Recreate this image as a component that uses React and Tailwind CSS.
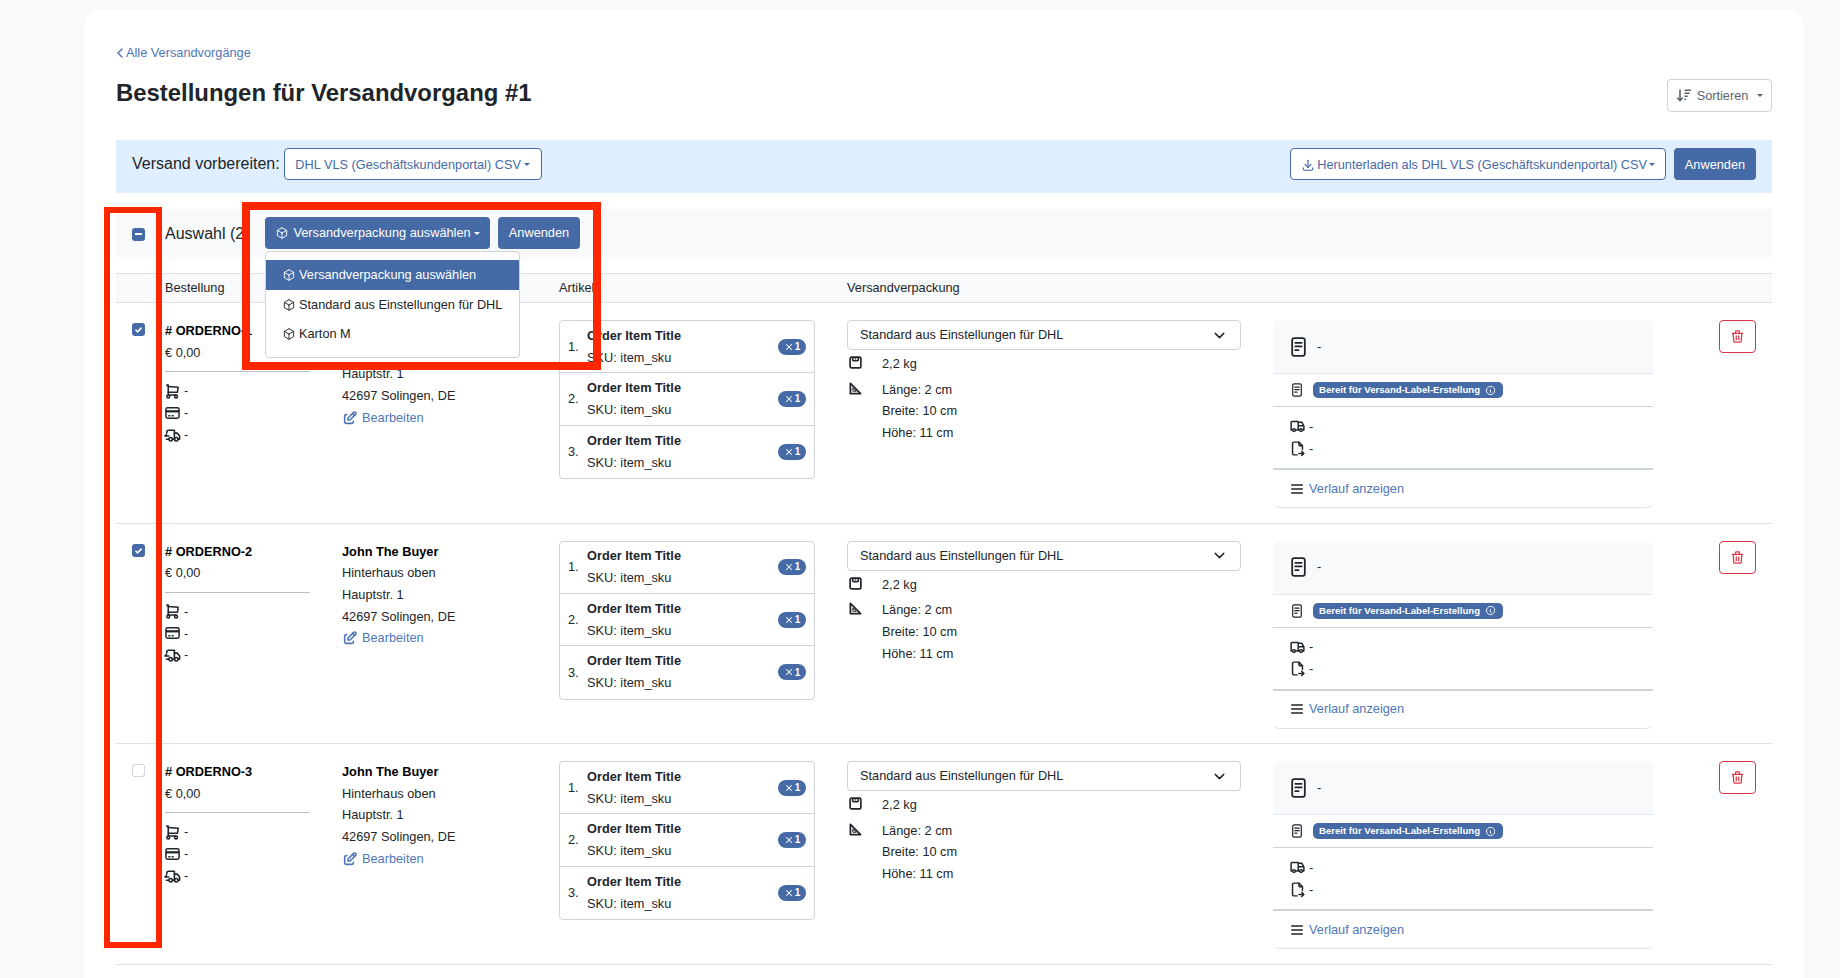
import React from "react";
import {
  TbBox, TbShoppingCart, TbTruck, TbFileExport,
  TbTrash, TbInfoCircle, TbEdit, TbChevronLeft, TbDownload, TbMenu2, TbChevronDown, TbX,
} from "react-icons/tb";

const Caret = ({ className = "" }) => (
  <span className={`inline-block w-0 h-0 border-x-[3.5px] border-t-[3.5px] border-x-transparent border-t-current ${className}`} />
);

const Weight = () => (
  <svg viewBox="0 0 14 14" className="w-[13px] h-[13px]" fill="none" stroke="currentColor" strokeWidth="1.8">
    <rect x="1.2" y="1.2" width="11.6" height="11.6" rx="1.5" />
    <path d="M4 1.5v2.6c0 .6.4 1 1 1h4c.6 0 1-.4 1-1V1.5M7 2.5v1.4" />
  </svg>
);

const SetSquare = () => (
  <svg viewBox="0 0 14 14" className="w-[13px] h-[13px]" fill="none" stroke="currentColor" strokeWidth="1.9" strokeLinejoin="round">
    <path d="M1.5 1.5v11h11z" />
    <path d="M4.2 10h3.6L4.2 6.4zM3 8.5h1" strokeWidth="1" />
  </svg>
);

const SortIcon = () => (
  <svg viewBox="0 0 16 14" className="w-[16px] h-[15px]" fill="none" stroke="currentColor" strokeWidth="1.6">
    <path d="M4 1v11M1.3 9.3 4 12l2.7-2.7" />
    <path d="M8.5 1.8h6.5M8.5 4.8h5M8.5 7.8h3.2M8.5 10.8h1.5" />
  </svg>
);

const DocIcon = ({ className }) => (
  <svg viewBox="0 0 14 19" className={className} fill="none" stroke="currentColor" strokeWidth="1.7" strokeLinecap="round">
    <rect x="1" y="1" width="12" height="17" rx="2" />
    <path d="M4 5.5h6M4 9h6M4 12.5h3" />
  </svg>
);

const CardIcon = ({ className }) => (
  <svg viewBox="0 0 16 14" className={className} fill="none" stroke="currentColor" strokeWidth="1.6">
    <rect x="1" y="1.5" width="14" height="11" rx="1.8" />
    <path d="M1 5.2h14" strokeWidth="2.4" />
    <path d="M3.5 9.8h2.2M7 9.8h2.2" />
  </svg>
);

const TruckMove = ({ className }) => (
  <svg viewBox="0 0 18 16" className={className} fill="none" stroke="currentColor" strokeWidth="1.7" strokeLinecap="round" strokeLinejoin="round">
    <path d="M3 6V4.5A1.5 1.5 0 0 1 4.5 3H11v9.5H9" />
    <path d="M11 6h3l2.5 3v3.5H15" />
    <circle cx="7" cy="12.5" r="1.8" />
    <circle cx="13" cy="12.5" r="1.8" />
    <path d="M1 9h4M1 9l1.5-1.5M5 12.5H2.5" />
  </svg>
);

function Items() {
  return (
    <div className="w-[256px] border border-[#ced4da] rounded-[4px] flex flex-col">
      {[1, 2, 3].map((n) => (
        <div key={n} className={`h-[52.4px] flex items-center pl-[8px] pr-[8px] ${n < 3 ? "border-b border-[#ced4da]" : ""}`}>
          <span className="w-[19px] shrink-0">{n}.</span>
          <div className="flex-1 min-w-0">
            <div className="font-bold leading-[22px] text-[#212529]">Order Item Title</div>
            <div className="leading-[22px]">SKU: item_sku</div>
          </div>
          <span className="w-[28px] h-[16px] rounded-full bg-[#456aa6] text-white text-[10px] font-bold flex items-center justify-center gap-[1px]">
            <TbX className="w-[10px] h-[10px]" strokeWidth={2.5} />1
          </span>
        </div>
      ))}
    </div>
  );
}

function Row({ state, no }) {
  return (
    <div className="h-[220.5px] flex border-b border-[#dee2e6] pt-[17px]">
      <div className="w-[49px] pl-[16px] pt-[3px] shrink-0">
        {state === "checked" ? (
          <span className="block w-[13px] h-[13px] rounded-[3px] bg-[#456aa6] text-white">
            <svg viewBox="0 0 13 13" className="w-[13px] h-[13px]" fill="none" stroke="currentColor" strokeWidth="1.6"><path d="M3.5 6.7 5.6 8.8 9.6 4.6" /></svg>
          </span>
        ) : (
          <span className="block w-[13px] h-[13px] rounded-[3px] border border-[#ced4da] bg-white" />
        )}
      </div>
      <div className="w-[177px] shrink-0">
        <div className="font-bold text-black">{`# ORDERNO-${no}`}</div>
        <div>€ 0,00</div>
        <div className="w-[145px] border-t border-[#bcc1c7] mt-[8px] mb-[8px]" />
        <div className="flex items-center gap-[3px] -ml-[1px]">
          <TbShoppingCart className="w-[17px] h-[17px]" strokeWidth={2.2} />
          <span>-</span>
        </div>
        <div className="flex items-center gap-[4px]">
          <CardIcon className="w-[15px] h-[14px]" />
          <span>-</span>
        </div>
        <div className="flex items-center gap-[3px] -ml-[1px]">
          <TruckMove className="w-[17px] h-[16px]" />
          <span>-</span>
        </div>
      </div>
      <div className="w-[217px] shrink-0">
        <div className="font-bold text-black">John The Buyer</div>
        <div>Hinterhaus oben</div>
        <div>Hauptstr. 1</div>
        <div>42697 Solingen, DE</div>
        <div className="flex items-center gap-[4px] text-[#4f76b8]">
          <TbEdit className="w-[16px] h-[16px]" strokeWidth={2.4} />
          Bearbeiten
        </div>
      </div>
      <div className="w-[288px] shrink-0">
        <Items />
      </div>
      <div className="w-[426px] shrink-0">
        <div className="w-[394px] h-[30px] border border-[#ced4da] rounded-[4px] flex items-center justify-between pl-[12px] pr-[12px]">
          <span>Standard aus Einstellungen für DHL</span>
          <TbChevronDown className="w-[17px] h-[17px]" />
        </div>
        <div className="flex mt-[3px]">
          <span className="w-[35px] pl-[2px] pt-[3px]"><Weight /></span>
          <span>2,2 kg</span>
        </div>
        <div className="flex mt-[4px]">
          <span className="w-[35px] pl-[2px] pt-[3px]"><SetSquare /></span>
          <div>
            <div>Länge: 2 cm</div>
            <div>Breite: 10 cm</div>
            <div>Höhe: 11 cm</div>
          </div>
        </div>
      </div>
      <div className="w-[446px] shrink-0">
        <div className="w-[380px] h-[188px] rounded-[6px] border-b border-[#dee2e6] overflow-hidden flex flex-col">
          <div className="h-[54px] bg-[#f8f9fa] border-b border-[#e2e8f0] flex items-center pl-[18px] gap-[11px]">
            <DocIcon className="w-[15px] h-[20px]" />
            <span>-</span>
          </div>
          <div className="h-[33px] border-b border-[#ced4da] flex items-center pl-[19px] gap-[11px]">
            <DocIcon className="w-[10px] h-[14px]" />
            <span className="h-[16px] rounded-[5px] bg-[#456aa6] text-white text-[9.6px] font-bold flex items-center gap-[5px] pl-[6px] pr-[7px]">
              Bereit für Versand-Label-Erstellung
              <TbInfoCircle className="w-[11px] h-[11px]" />
            </span>
          </div>
          <div className="h-[63px] border-b-2 border-[#ced4da] flex flex-col justify-center pl-[16px]">
            <div className="flex items-center gap-[3px]">
              <TbTruck className="w-[17px] h-[17px]" strokeWidth={2.1} />
              <span>-</span>
            </div>
            <div className="flex items-center gap-[3px]">
              <TbFileExport className="w-[17px] h-[17px]" strokeWidth={2.1} />
              <span>-</span>
            </div>
          </div>
          <div className="flex-1 flex items-center pl-[16px] gap-[4px] text-[#4f76b8]">
            <TbMenu2 className="w-[16px] h-[16px] text-[#212529]" strokeWidth={2.2} />
            Verlauf anzeigen
          </div>
        </div>
      </div>
      <div className="w-[37px] h-[33px] border border-[#dc3545] rounded-[4px] flex items-center justify-center text-[#dc3545] shrink-0">
        <TbTrash className="w-[15px] h-[15px]" />
      </div>
    </div>
  );
}

export default function App() {
  return (
    <div className="relative h-screen overflow-hidden bg-[#f8f9fb] text-[12.75px] leading-[21.67px] text-[#212529] font-['Liberation_Sans',Arial,sans-serif]">
      <div className="ml-[84px] mt-[10px] w-[1720px] h-[1100px] bg-white rounded-[16px] pt-[33px] pl-[32px] pr-[32px]">
        <div className="flex justify-between items-start h-[97px]">
          <div>
            <a className="flex items-center h-[20px] text-[#4f76b8]">
              <TbChevronLeft className="w-[16px] h-[16px] -ml-[4px] -mr-[2px]" strokeWidth={2.2} />
              Alle Versandvorgänge
            </a>
            <h1 className="mt-[14px] text-[23.9px] leading-[32px] font-bold text-[#212529]">Bestellungen für Versandvorgang #1</h1>
          </div>
          <button className="mt-[36px] w-[105px] h-[33px] border border-[#ced4da] rounded-[4px] flex items-center justify-center gap-[5px] text-[#5c636a]">
            <SortIcon />
            <span>Sortieren</span>
            <Caret className="ml-[4px]" />
          </button>
        </div>

        <div className="h-[53px] bg-[#e0efff] flex justify-between pt-[8px] pl-[16px] pr-[16px]">
          <div className="flex items-start gap-[4px]">
            <span className="text-[16px] leading-[32px]">Versand vorbereiten:</span>
            <button className="h-[32px] w-[258px] pt-[1px] bg-white border border-[#456aa6] rounded-[4px] text-[#456aa6] flex items-center justify-center gap-[3px]">
              DHL VLS (Geschäftskundenportal) CSV
              <Caret />
            </button>
          </div>
          <div className="flex items-start gap-[8px]">
            <button className="h-[32px] pt-[1px] px-[10px] bg-white border border-[#456aa6] rounded-[4px] text-[#456aa6] flex items-center gap-[2px]">
              <TbDownload className="w-[14px] h-[14px]" />
              Herunterladen als DHL VLS (Geschäftskundenportal) CSV
              <Caret />
            </button>
            <button className="h-[32px] pt-[1px] w-[82px] bg-[#456aa6] rounded-[4px] text-white">Anwenden</button>
          </div>
        </div>

        <div className="relative mt-[16px] h-[48px] bg-[#f8f9fa] flex items-center pl-[16px]">
          <span className="mt-[2px] w-[13px] h-[13px] rounded-[3px] bg-[#456aa6] flex items-center justify-center shrink-0">
            <span className="w-[7px] h-[2px] bg-white" />
          </span>
          <span className="mt-[2px] ml-[20px] w-[100px] text-[16px] shrink-0">Auswahl (2)</span>
          <button className="h-[32px] w-[225px] bg-[#456aa6] rounded-[4px] text-white flex items-center justify-center gap-[3px]">
            <TbBox className="w-[14px] h-[14px] mr-[1px]" strokeWidth={1.6} />
            Versandverpackung auswählen
            <Caret />
          </button>
          <button className="ml-[8px] h-[32px] w-[82px] bg-[#456aa6] rounded-[4px] text-white">Anwenden</button>
          <div className="absolute left-[149px] top-[42px] w-[255px] h-[107px] z-10 bg-white border border-[#ced4da] rounded-[4px] pt-[8px]">
            <div className="h-[30px] bg-[#456aa6] text-white flex items-center pl-[16px] gap-[3px]">
              <TbBox className="w-[14px] h-[14px]" strokeWidth={1.6} /> Versandverpackung auswählen
            </div>
            <div className="h-[29px] flex items-center pl-[16px] gap-[3px]">
              <TbBox className="w-[14px] h-[14px]" strokeWidth={1.6} /> Standard aus Einstellungen für DHL
            </div>
            <div className="h-[29px] flex items-center pl-[16px] gap-[3px]">
              <TbBox className="w-[14px] h-[14px]" strokeWidth={1.6} /> Karton M
            </div>
          </div>
        </div>

        <div className="mt-[16px] h-[30px] pb-[1px] bg-[#f8f9fa] border-y border-[#dee2e6] flex items-center">
          <span className="w-[49px]" />
          <span className="w-[177px]">Bestellung</span>
          <span className="w-[217px]" />
          <span className="w-[288px]">Artikel</span>
          <span>Versandverpackung</span>
        </div>

        <Row state="checked" no={1} />
        <Row state="checked" no={2} />
        <Row state="none" no={3} />
      </div>

      <div className="absolute left-[104px] top-[207px] w-[58px] h-[741px] border-[6px] border-[#ff2600] z-20" />
      <div className="absolute left-[242px] top-[202px] w-[359px] h-[168px] border-[8px] border-[#ff2600] z-20" />
    </div>
  );
}
